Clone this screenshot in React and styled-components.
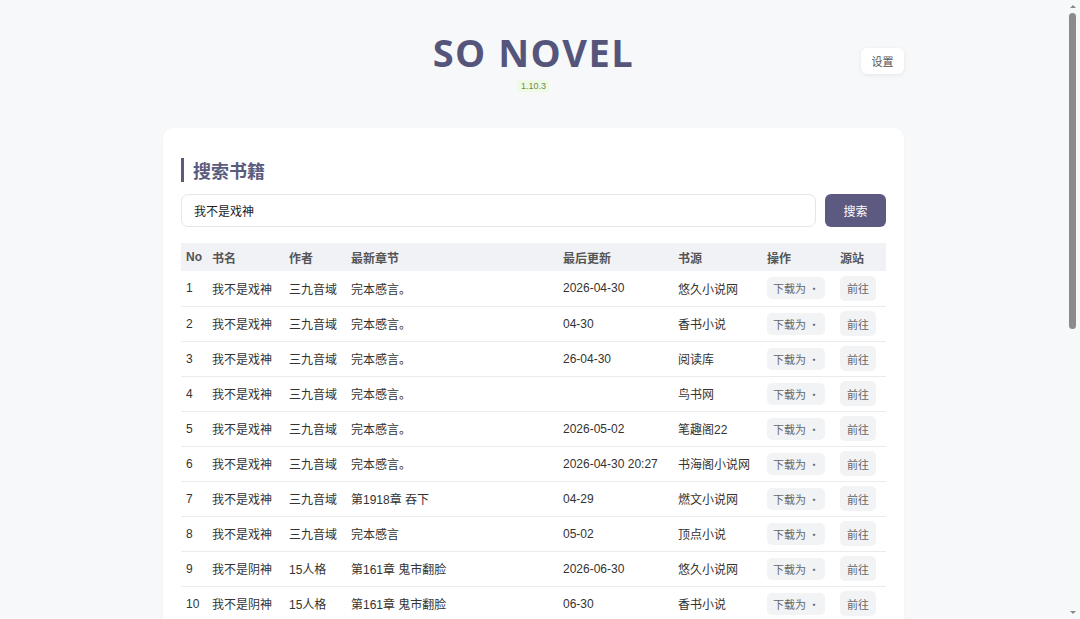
import React, { useState } from 'react';
import styled, { createGlobalStyle } from 'styled-components';

const GlobalStyle = createGlobalStyle`
  html, body {
    margin: 0;
    padding: 0;
    background: #f7f8fa;
    font-family: "Liberation Sans", "Noto Sans CJK SC", sans-serif;
    color: #333;
  }
  body {
    padding-right: 13px;
  }
`;

const Page = styled.div`
  width: 741px;
  margin: 0 auto;
  padding: 28px 0 40px;
`;

// window scrollbar, drawn over the right edge like the browser's own
const ScrollTrack = styled.div`
  position: fixed;
  top: 0;
  right: 0;
  bottom: 0;
  width: 15px;
  background: #f7f8fa;
  display: flex;
  flex-direction: column;
  align-items: center;
`;

const ScrollArrow = styled.div`
  width: 0;
  height: 0;
  margin: 5px 0;
  border-left: 3px solid transparent;
  border-right: 3px solid transparent;
  ${p => (p.down ? 'border-top: 3px solid #888;' : 'border-bottom: 3px solid #888;')}
`;

const ScrollThumb = styled.div`
  width: 7px;
  height: 316px;
  border-radius: 4px;
  background: #8b8b8b;
`;

const ScrollSpace = styled.div`
  flex: 1;
`;

const Header = styled.header`
  display: grid;
  grid-template-columns: 1fr auto 1fr;
  align-items: start;
  height: 100px;
`;

const Brand = styled.div`
  grid-column: 2;
  display: flex;
  flex-direction: column;
  align-items: center;
`;

const Title = styled.h1`
  margin: 0;
  font-family: "Open Sans", "Liberation Sans", sans-serif;
  font-size: 38px;
  font-weight: 700;
  letter-spacing: 1.5px;
  line-height: 48px;
  color: #55557c;
`;

const Version = styled.span`
  margin-top: 4px;
  padding: 1px 3px;
  font-size: 9px;
  color: #6f8a4f;
  background: #effae4;
  border-radius: 2px;
`;

const SettingsButton = styled.button`
  grid-column: 3;
  justify-self: end;
  margin-top: 20px;
  width: 43px;
  height: 26px;
  border: none;
  border-radius: 6px;
  background: #fff;
  box-shadow: 0 1px 4px rgba(0, 0, 0, 0.08);
  font-family: "Noto Sans CJK SC", sans-serif;
  font-size: 11px;
  color: #555;
  cursor: pointer;
`;

const Card = styled.main`
  background: #fff;
  border-radius: 10px;
  box-shadow: 0 1px 3px rgba(0, 0, 0, 0.04);
  padding: 30px 18px 30px;
`;

const SectionTitle = styled.h2`
  margin: 0;
  padding-left: 9px;
  border-left: 3px solid #5b5b7e;
  font-family: "Noto Sans CJK SC", sans-serif;
  font-size: 18px;
  font-weight: 700;
  line-height: 24px;
  color: #5b5b7e;
`;

const SearchRow = styled.form`
  display: flex;
  gap: 9px;
  margin-top: 12px;
`;

const SearchInput = styled.input`
  flex: 1;
  height: 33px;
  box-sizing: border-box;
  padding: 0 12px;
  border: 1px solid #e6e6e8;
  border-radius: 7px;
  font-family: "Noto Sans CJK SC", sans-serif;
  font-size: 12px;
  color: #222;
  outline: none;
`;

const SearchButton = styled.button`
  width: 61px;
  height: 33px;
  border: none;
  border-radius: 6px;
  background: #5c5a80;
  color: #fff;
  font-family: "Noto Sans CJK SC", sans-serif;
  font-size: 12px;
  cursor: pointer;
`;

const Table = styled.table`
  width: 705px;
  margin-top: 16px;
  border-collapse: collapse;
  table-layout: fixed;
  font-size: 12px;
`;

const HeadCell = styled.th`
  box-sizing: border-box;
  width: ${p => p.w}px;
  height: 28px;
  padding: 0 0 0 5px;
  background: #f1f2f5;
  text-align: left;
  font-weight: 700;
  color: #555;
  font-family: "Liberation Sans", "Noto Sans CJK SC", sans-serif;
`;

const Row = styled.tr`
  border-bottom: 1px solid #ebebed;
`;

const Cell = styled.td`
  box-sizing: border-box;
  height: 35px;
  padding: 0 0 0 5px;
  white-space: nowrap;
  overflow: hidden;
  color: #333;
`;

const SmallButton = styled.button`
  height: ${p => (p.tall ? 25 : 22)}px;
  padding: 0 ${p => (p.tall ? 7 : 6)}px;
  border: none;
  border-radius: 5px;
  background: #f2f3f5;
  color: #666;
  font-family: "Noto Sans CJK SC", sans-serif;
  font-size: 11px;
  cursor: pointer;
`;

const columns = [
  ['No', 26],
  ['书名', 77],
  ['作者', 62],
  ['最新章节', 212],
  ['最后更新', 115],
  ['书源', 89],
  ['操作', 73],
  ['源站', 51],
];

const books = [
  ['我不是戏神', '三九音域', '完本感言。', '2026-04-30', '悠久小说网'],
  ['我不是戏神', '三九音域', '完本感言。', '04-30', '香书小说'],
  ['我不是戏神', '三九音域', '完本感言。', '26-04-30', '阅读库'],
  ['我不是戏神', '三九音域', '完本感言。', '', '鸟书网'],
  ['我不是戏神', '三九音域', '完本感言。', '2026-05-02', '笔趣阁22'],
  ['我不是戏神', '三九音域', '完本感言。', '2026-04-30 20:27', '书海阁小说网'],
  ['我不是戏神', '三九音域', '第1918章 吞下', '04-29', '燃文小说网'],
  ['我不是戏神', '三九音域', '完本感言', '05-02', '顶点小说'],
  ['我不是阴神', '15人格', '第161章 鬼市翻脸', '2026-06-30', '悠久小说网'],
  ['我不是阴神', '15人格', '第161章 鬼市翻脸', '06-30', '香书小说'],
  ['我不是阴神', '15人格', '第161章 鬼市翻脸', '26-06-30', '阅读库'],
  ['我不是阴神', '15人格', '第161章 鬼市翻脸', '2026-06-30', '笔趣阁22'],
  ['我不是阴神', '15人格', '第160章 夜行', '06-29', '燃文小说网'],
  ['我不是阴神', '15人格', '第161章 鬼市翻脸', '06-30', '顶点小说'],
  ['我不是阴神', '15人格', '第161章 鬼市翻脸', '2026-06-30 08:12', '书海阁小说网'],
  ['我不是剑神', '青衫', '第88章 出鞘', '2026-03-12', '悠久小说网'],
  ['我不是剑神', '青衫', '第88章 出鞘', '03-12', '香书小说'],
  ['我不是剑神', '青衫', '第88章 出鞘', '26-03-12', '阅读库'],
  ['我不是剑神', '青衫', '第87章 雨夜', '03-11', '鸟书网'],
  ['我不是剑神', '青衫', '第88章 出鞘', '2026-03-12', '笔趣阁22'],
  ['我不是剑神', '青衫', '第88章 出鞘', '03-12', '顶点小说'],
  ['我不是财神', '南山', '第12章 开张', '2026-02-01', '悠久小说网'],
  ['我不是财神', '南山', '第12章 开张', '02-01', '香书小说'],
  ['我不是财神', '南山', '第12章 开张', '26-02-01', '燃文小说网'],
];

const App = () => {
  const [keyword, setKeyword] = useState('我不是戏神');

  return (
    <>
      <GlobalStyle />
      <Page>
        <Header>
          <Brand>
            <Title>SO NOVEL</Title>
            <Version>1.10.3</Version>
          </Brand>
          <SettingsButton type="button">设置</SettingsButton>
        </Header>
        <Card>
          <SectionTitle>搜索书籍</SectionTitle>
          <SearchRow onSubmit={e => e.preventDefault()}>
            <SearchInput value={keyword} onChange={e => setKeyword(e.target.value)} />
            <SearchButton type="submit">搜索</SearchButton>
          </SearchRow>
          <Table>
            <thead>
              <tr>
                {columns.map(([name, w]) => (
                  <HeadCell key={name} w={w}>
                    {name}
                  </HeadCell>
                ))}
              </tr>
            </thead>
            <tbody>
              {books.map((b, i) => (
                <Row key={i}>
                  <Cell>{i + 1}</Cell>
                  <Cell>{b[0]}</Cell>
                  <Cell>{b[1]}</Cell>
                  <Cell>{b[2]}</Cell>
                  <Cell>{b[3]}</Cell>
                  <Cell>{b[4]}</Cell>
                  <Cell>
                    <SmallButton type="button">下载为 ·</SmallButton>
                  </Cell>
                  <Cell>
                    <SmallButton type="button" tall>
                      前往
                    </SmallButton>
                  </Cell>
                </Row>
              ))}
            </tbody>
          </Table>
        </Card>
      </Page>
      <ScrollTrack>
        <ScrollArrow />
        <ScrollThumb />
        <ScrollSpace />
        <ScrollArrow down />
      </ScrollTrack>
    </>
  );
};

export default App;
